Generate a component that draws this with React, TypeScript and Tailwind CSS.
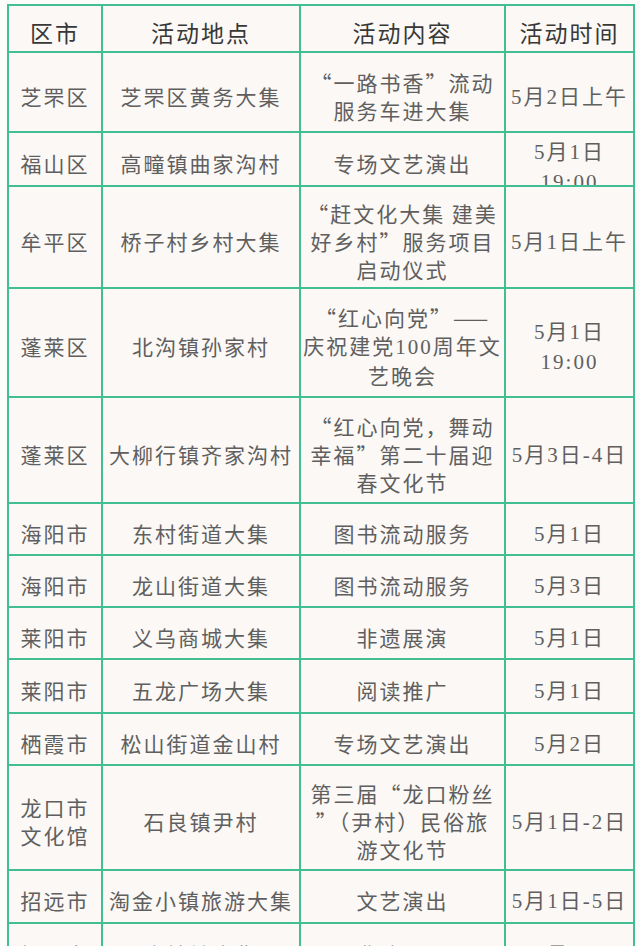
import React from "react";

type Row = { h: string; c: string[][]; special?: boolean };

const rows: Row[] = [
  { h: "h-[78px]", c: [["芝罘区"], ["芝罘区黄务大集"], ["“一路书香”流动", "服务车进大集"], ["5月2日上午"]] },
  { h: "h-[52px]", c: [["福山区"], ["高疃镇曲家沟村"], ["专场文艺演出"], ["5月1日", "19:00"]], special: true },
  { h: "h-[100px]", c: [["牟平区"], ["桥子村乡村大集"], ["“赶文化大集 建美", "好乡村”服务项目", "启动仪式"], ["5月1日上午"]] },
  { h: "h-[107px]", c: [["蓬莱区"], ["北沟镇孙家村"], ["“红心向党”——", "庆祝建党100周年文", "艺晚会"], ["5月1日", "19:00"]] },
  { h: "h-[104px]", c: [["蓬莱区"], ["大柳行镇齐家沟村"], ["“红心向党，舞动", "幸福”第二十届迎", "春文化节"], ["5月3日-4日"]] },
  { h: "h-[50px]", c: [["海阳市"], ["东村街道大集"], ["图书流动服务"], ["5月1日"]] },
  { h: "h-[50px]", c: [["海阳市"], ["龙山街道大集"], ["图书流动服务"], ["5月3日"]] },
  { h: "h-[50px]", c: [["莱阳市"], ["义乌商城大集"], ["非遗展演"], ["5月1日"]] },
  { h: "h-[52px]", c: [["莱阳市"], ["五龙广场大集"], ["阅读推广"], ["5月1日"]] },
  { h: "h-[50px]", c: [["栖霞市"], ["松山街道金山村"], ["专场文艺演出"], ["5月2日"]] },
  { h: "h-[103px]", c: [["龙口市", "文化馆"], ["石良镇尹村"], ["第三届“龙口粉丝", "”（尹村）民俗旅", "游文化节"], ["5月1日-2日"]] },
  { h: "h-[51px]", c: [["招远市"], ["淘金小镇旅游大集"], ["文艺演出"], ["5月1日-5日"]] },
  { h: "h-[52px]", c: [["招远市"], ["金岭镇大集"], ["非遗展示"], ["5月1日"]] },
];

function Mixed({ text }: { text: string }) {
  const parts = text.split(/([0-9:\-]+)/).filter((p) => p.length > 0);
  return (
    <>
      {parts.map((p, i) =>
        /^[0-9:\-]+$/.test(p) ? (
          <span key={i} className="font-['Liberation_Serif',serif]">
            {p}
          </span>
        ) : (
          <span key={i}>{p}</span>
        )
      )}
    </>
  );
}

function Cell({ lines, h, special }: { lines: string[]; h: string; special?: boolean }) {
  return (
    <div
      className={`${h} bg-[#fbf8f5] flex justify-center overflow-hidden text-[21px] tracking-[2px] text-[#5f5f5f] ${
        special ? "items-start pt-[3px]" : "items-center pt-[7px]"
      }`}
    >
      <div className="text-center">
        {lines.map((l, i) => (
          <div key={i} className="whitespace-nowrap leading-[28px]">
            <Mixed text={l} />
          </div>
        ))}
      </div>
    </div>
  );
}

export default function App() {
  const headers = ["区市", "活动地点", "活动内容", "活动时间"];
  return (
    <div className="w-[640px] h-[946px] overflow-hidden bg-[#fcfcfb] pt-[4px] pl-[7px] font-['Noto_Sans_CJK_SC',sans-serif]">
      <div className="w-[628px] bg-[#41be93] p-[2px] grid grid-cols-[92px_196px_203px_127px] gap-[2px]">
        {headers.map((t) => (
          <div
            key={t}
            className="h-[45px] bg-[#fbf8f5] flex items-center justify-center pt-[7px] text-[23px] tracking-[2px] text-[#383838]"
          >
            {t}
          </div>
        ))}
        {rows.map((r, ri) =>
          r.c.map((lines, ci) => (
            <Cell key={`${ri}-${ci}`} lines={lines} h={r.h} special={r.special && ci === 3} />
          ))
        )}
      </div>
    </div>
  );
}
